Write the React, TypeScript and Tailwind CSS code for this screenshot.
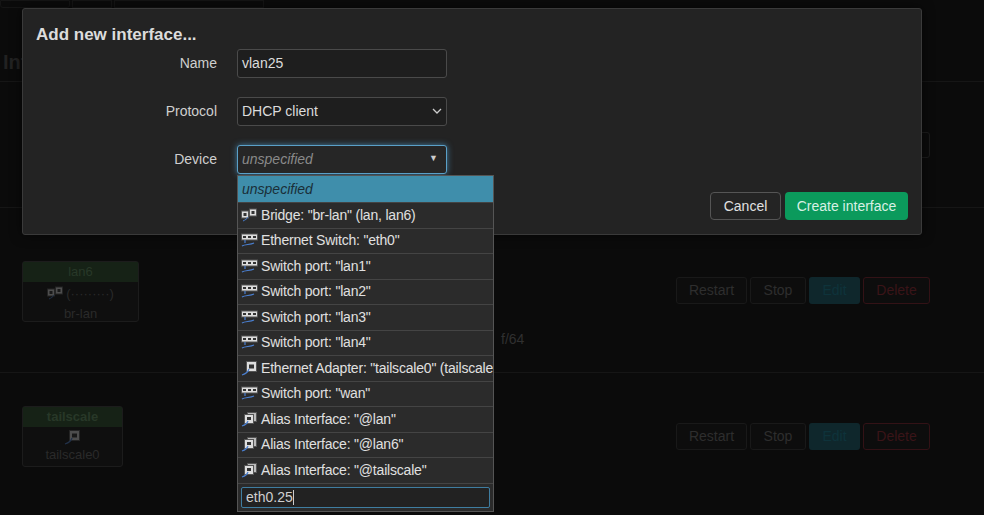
import React from "react";

const OPTIONS: { icon: "bridge" | "switch" | "eth" | "alias"; label: string }[] = [
  { icon: "bridge", label: 'Bridge: "br-lan" (lan, lan6)' },
  { icon: "switch", label: 'Ethernet Switch: "eth0"' },
  { icon: "switch", label: 'Switch port: "lan1"' },
  { icon: "switch", label: 'Switch port: "lan2"' },
  { icon: "switch", label: 'Switch port: "lan3"' },
  { icon: "switch", label: 'Switch port: "lan4"' },
  { icon: "eth", label: 'Ethernet Adapter: "tailscale0" (tailscale)' },
  { icon: "switch", label: 'Switch port: "wan"' },
  { icon: "alias", label: 'Alias Interface: "@lan"' },
  { icon: "alias", label: 'Alias Interface: "@lan6"' },
  { icon: "alias", label: 'Alias Interface: "@tailscale"' },
];

function DevIcon({ kind, dim = false }: { kind: string; dim?: boolean }) {
  const o = dim ? 0.3 : 1;
  if (kind === "switch")
    return (
      <svg width="17" height="15" viewBox="0 0 17 15" className="shrink-0" style={{ opacity: o }}>
        <rect x="0.5" y="1" width="16" height="6" fill="#ddd" stroke="#555" />
        <rect x="2" y="3" width="3" height="2" fill="#333" />
        <rect x="7" y="3" width="3" height="2" fill="#333" />
        <rect x="12" y="3" width="3" height="2" fill="#333" />
        <path d="M4 7v3M1 13c3-2 8-1 12-3" stroke="#4a7fd0" fill="none" strokeWidth="1.2" />
      </svg>
    );
  if (kind === "bridge")
    return (
      <svg width="17" height="15" viewBox="0 0 17 15" className="shrink-0" style={{ opacity: o }}>
        <rect x="0.5" y="3" width="7" height="7" fill="#ddd" stroke="#555" />
        <rect x="8.5" y="1" width="7" height="7" fill="#ddd" stroke="#555" />
        <rect x="2.5" y="5" width="3" height="3" fill="#333" />
        <rect x="10.5" y="3" width="3" height="3" fill="#333" />
        <path d="M2 13c2-1 4-2 5-4" stroke="#4a7fd0" fill="none" />
      </svg>
    );
  if (kind === "alias")
    return (
      <svg width="17" height="15" viewBox="0 0 17 15" className="shrink-0" style={{ opacity: o }}>
        <rect x="6.5" y="0.5" width="9" height="9" fill="#bbb" stroke="#555" />
        <rect x="3.5" y="2.5" width="9" height="9" fill="#ddd" stroke="#555" />
        <rect x="6" y="5" width="4" height="3" fill="#333" />
        <path d="M1 14c3-1 5-2 6-5" stroke="#4a7fd0" fill="none" strokeWidth="1.2" />
      </svg>
    );
  return (
    <svg width="17" height="15" viewBox="0 0 17 15" className="shrink-0" style={{ opacity: o }}>
      <rect x="5.5" y="0.5" width="10" height="10" fill="#ddd" stroke="#555" />
      <rect x="8" y="3.5" width="5" height="4" fill="#333" />
      <path d="M1 14c3-1 6-2 7-6" stroke="#4a7fd0" fill="none" strokeWidth="1.2" />
    </svg>
  );
}

function RowButtons() {
  return (
    <div className="flex gap-[3px] text-[14px]">
      <div className="w-[71px] h-[27px] flex items-center justify-center border border-[#191919] rounded-[3px] text-[#2e2e2e] bg-[#0d0d0d]">Restart</div>
      <div className="w-[56px] h-[27px] flex items-center justify-center border border-[#191919] rounded-[3px] text-[#2e2e2e] bg-[#0d0d0d]">Stop</div>
      <div className="w-[51px] h-[27px] flex items-center justify-center rounded-[3px] text-[#0e333b] bg-[#0f272c]">Edit</div>
      <div className="w-[67px] h-[27px] flex items-center justify-center border border-[#331216] rounded-[3px] text-[#3a1418] bg-[#0d0d0d]">Delete</div>
    </div>
  );
}

export default function App() {
  return (
    <div className="relative w-[984px] h-[515px] overflow-hidden bg-[#0b0b0b] text-[14px]" style={{ fontFamily: '"Liberation Sans", Arial, sans-serif' }}>
      {/* dimmed page behind the modal */}
      <div className="flex gap-[2px] h-[8px]">
        <div className="w-[70px] border border-[#151515] rounded-b-[3px]" />
        <div className="w-[40px] border border-[#151515]" />
        <div className="w-[150px] border border-[#151515]" />
      </div>
      <div className="pl-[3px] pt-[42px] text-[20px] font-bold leading-[24px] text-[#222]">Int</div>
      <div className="h-[8px] border-b border-[#161616]" />
      <div className="h-[126px] border-b border-[#161616] flex justify-end pr-[54px] pt-[50px]">
        <div className="w-[10px] h-[26px] border border-[#1c1c1c] rounded-r-[3px]" />
      </div>
      <div className="h-[165px] border-b border-[#161616] pl-[22px] pt-[53px] flex">
        <div className="w-[117px] h-[61px] border border-[#1c1c1c] rounded-[3px] bg-[#0f0f0f] text-[#2a2a2a] text-center text-[13px]">
          <div className="h-[20px] bg-[#162216] text-[#283828] flex items-center justify-center">lan6</div>
          <div className="flex items-center justify-center gap-[2px] mt-[2px]"><DevIcon kind="bridge" dim /><span>(·········)</span></div>
          <div>br-lan</div>
        </div>
        <div className="flex-1 relative">
          <div className="absolute right-[54px] top-[16px]"><RowButtons /></div>
          <div className="absolute left-[362px] top-[68px] text-[#303030]">f/64</div>
        </div>
      </div>
      <div className="pl-[22px] pt-[33px] flex">
        <div className="w-[101px] h-[61px] border border-[#1c1c1c] rounded-[3px] bg-[#0f0f0f] text-[#2a2a2a] text-center text-[13px]">
          <div className="h-[20px] bg-[#162216] text-[#283828] font-bold flex items-center justify-center">tailscale</div>
          <div className="flex justify-center mt-[3px]"><DevIcon kind="eth" dim /></div>
          <div>tailscale0</div>
        </div>
        <div className="flex-1 relative">
          <div className="absolute right-[54px] top-[17px]"><RowButtons /></div>
        </div>
      </div>

      {/* modal */}
      <div className="absolute left-[22px] top-[8px] w-[900px] h-[227px] bg-[#232323] border border-[#3a3a3a] rounded-[3px] shadow-[0_0_12px_rgba(0,0,0,0.6)]">
        <div className="pl-[13px] pt-[13px] text-[17px] font-bold text-[#dcdcdc]">Add new interface...</div>
        <div className="mt-[1px] flex flex-col gap-[19px]">
          {[
            ["Name", "name"],
            ["Protocol", "proto"],
            ["Device", "dev"],
          ].map(([l, k]) => (
            <div key={k} className="flex items-center">
              <div className="w-[194px] text-right text-[#cfcfcf]">{l}</div>
              <div className="ml-[20px]">
                {k === "name" && (
                  <div className="w-[210px] h-[29px] border border-[#4a4a4a] rounded-[3px] bg-[#1e1e1e] px-[4px] flex items-center text-[#dcdcdc]">vlan25</div>
                )}
                {k === "proto" && (
                  <div className="w-[210px] h-[29px] border border-[#4a4a4a] rounded-[3px] bg-[#1e1e1e] px-[4px] flex items-center justify-between text-[#dcdcdc]">
                    DHCP client
                    <svg width="10" height="6" viewBox="0 0 10 6"><path d="M1 1l4 4 4-4" stroke="#ccc" fill="none" strokeWidth="1.3" /></svg>
                  </div>
                )}
                {k === "dev" && (
                  <div className="w-[210px] h-[29px] border border-[#5aa0c8] rounded-[3px] bg-[#262626] px-[4px] flex items-center justify-between text-[#8a8a8a] italic shadow-[0_0_6px_rgba(80,160,210,0.7)]">
                    unspecified
                    <span className="not-italic text-[9px] text-[#ccc] mr-[4px]">▼</span>
                  </div>
                )}
              </div>
            </div>
          ))}
        </div>
        <div className="absolute right-[13px] top-[183px] flex gap-[4px]">
          <div className="w-[71px] h-[28px] flex items-center justify-center border border-[#555] rounded-[4px] bg-[#242424] text-[#e0e0e0]">Cancel</div>
          <div className="w-[123px] h-[28px] flex items-center justify-center rounded-[4px] bg-[#0b9a5c] text-[#d8f0e4]">Create interface</div>
        </div>
      </div>

      {/* dropdown */}
      <div className="absolute left-[237px] top-[175px] w-[257px] bg-[#2b2b2b] border border-[#555] text-[#e0e0e0]">
        <div className="h-[26px] bg-[#3f8eab] italic text-[#1a2e38] px-[4px] flex items-center">unspecified</div>
        {OPTIONS.map((o) => (
          <div key={o.label} className="h-[25.5px] border-t border-[#444] px-[3px] flex items-center gap-[3px] whitespace-nowrap overflow-hidden tracking-[-0.2px]">
            <DevIcon kind={o.icon} />
            <span>{o.label}</span>
          </div>
        ))}
        <div className="border-t border-[#444] px-[3px] py-[3px]">
          <div className="h-[21px] border border-[#3f7da0] rounded-[2px] bg-[#222] px-[4px] flex items-center text-[#cfcfcf]">
            eth0.25<span className="w-[1px] h-[15px] bg-[#ccc]" />
          </div>
        </div>
      </div>
    </div>
  );
}
